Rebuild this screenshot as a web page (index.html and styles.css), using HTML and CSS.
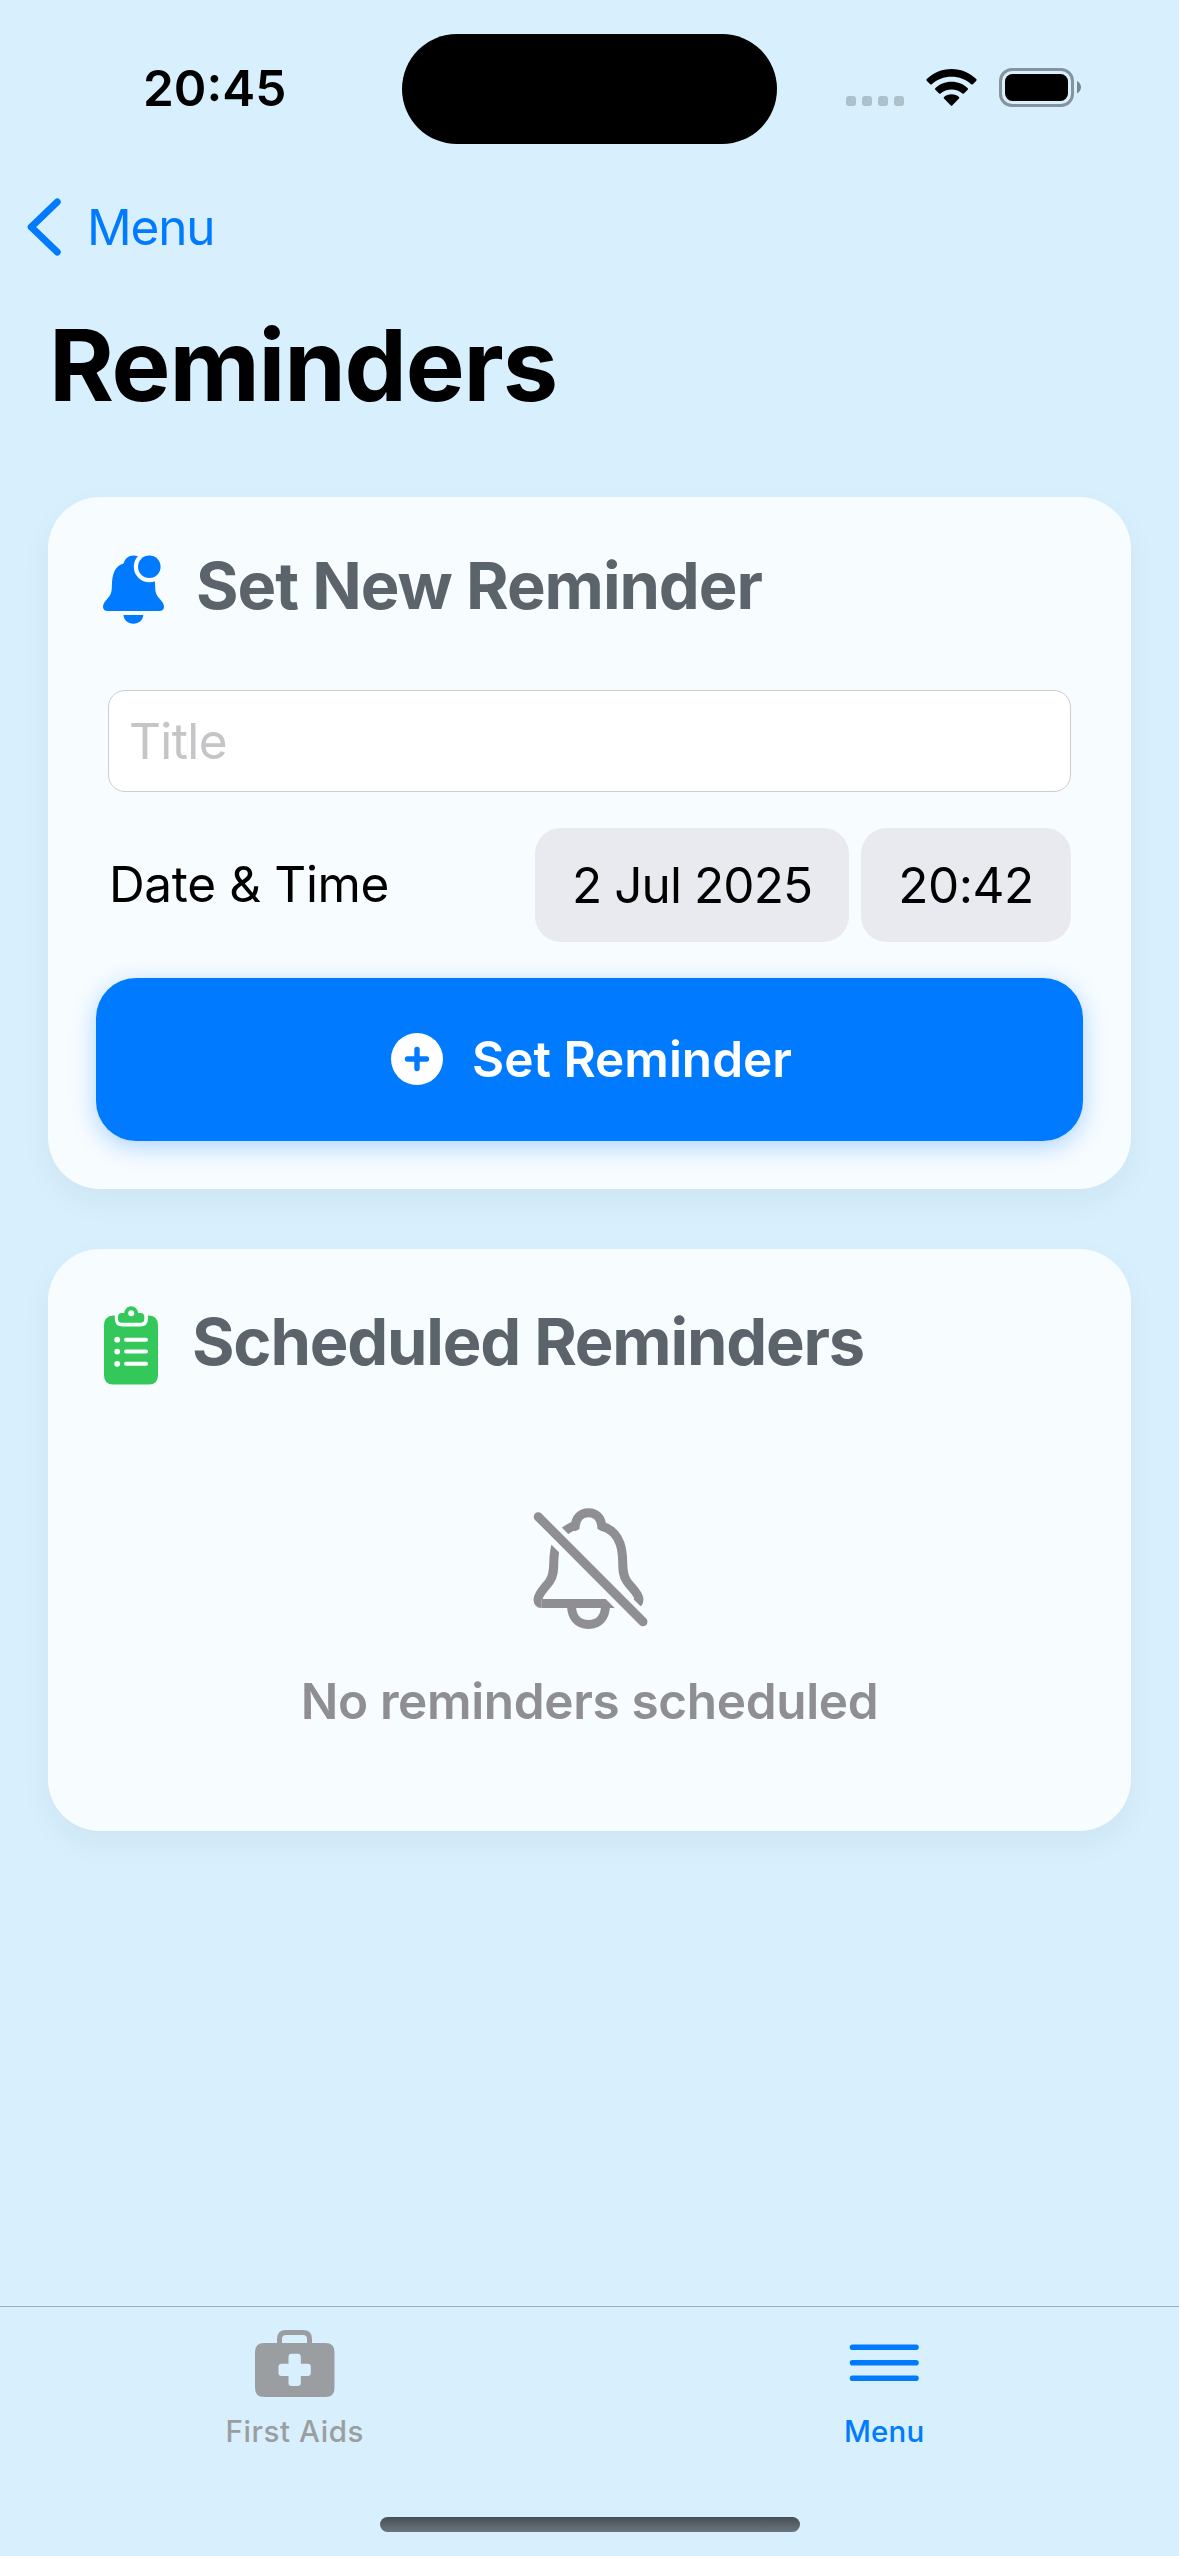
FILE: index.html
```html
<!DOCTYPE html>
<html lang="en">
<head>
<meta charset="utf-8">
<title>Reminders</title>
<link rel="stylesheet" href="styles.css">
</head>
<body>
<div class="screen">
  <header class="status-bar">
    <div class="status-time"><span class="clock">20:45</span></div>
    <div class="island"></div>
    <div class="status-icons">
      <svg class="signal" width="58" height="10" viewBox="0 0 58 10"><rect width="10" height="10" rx="3"/><rect x="16" width="10" height="10" rx="3"/><rect x="32" width="10" height="10" rx="3"/><rect x="48" width="10" height="10" rx="3"/></svg>
      <svg class="wifi" width="51" height="38" viewBox="0 0 51 38"><path d="M25.500 0C35.500 0 44 4 50.300 10.100Q51 11 50.300 11.700L46.800 15.200Q46 15.900 45.200 15.200C40 10.400 33 7.800 25.500 7.800S11 10.400 5.800 15.200Q5 15.900 4.200 15.200L.7 11.700Q0 11 .7 10.100C7 4 15.500 0 25.500 0Z"/><path d="M25.500 12.800C32 12.800 37.500 15.200 41.700 19.200Q42.400 20 41.700 20.700L37.900 24.400Q37.200 25 36.400 24.400C33.400 21.800 29.700 20.400 25.500 20.400S17.600 21.800 14.600 24.400Q13.800 25 13.100 24.400L9.300 20.700Q8.600 20 9.300 19.200C13.500 15.200 19 12.800 25.500 12.800Z"/><path d="M25.500 25.300C28.500 25.300 31 26.300 33 28.100Q33.700 28.900 33 29.600L26.200 36.600Q25.500 37.300 24.800 36.600L18 29.600Q17.300 28.900 18 28.100C20 26.300 22.500 25.300 25.500 25.300Z"/></svg>
      <svg class="battery" width="82" height="39" viewBox="0 0 82 39"><rect class="battery-shell" x="1.500" y="1.500" width="72" height="36" rx="11.500"/><rect x="6" y="6" width="63" height="27" rx="7.500"/><path class="battery-tip" d="M78 13Q82 15.500 82 19.300T78 25.600Z"/></svg>
    </div>
  </header>

  <nav class="nav-bar">
    <svg width="35" height="58" viewBox="0 0 35 58"><path d="M30.200 4L4.200 29L30.200 54" fill="none" stroke="currentColor" stroke-width="7" stroke-linecap="round" stroke-linejoin="round"/></svg>
    <span class="back-label">Menu</span>
  </nav>

  <h1 class="page-title"><span>Reminders</span></h1>

  <main class="cards">
    <section class="card">
      <div class="card-head">
        <svg class="bell-icon" width="62" height="70" viewBox="0 0 62 70"><defs><mask id="badge-gap"><rect width="62" height="70" fill="#fff"/><circle cx="46.300" cy="11.800" r="15.500"/></mask></defs><g fill="currentColor"><g mask="url(#badge-gap)"><path d="M5 56Q0 56 0 51.800C0 48.500 2.300 46 5 43C8 39.700 8.700 37 8.900 31C9 20 11.500 11 20.500 8.500C22 3.500 25.500 .5 30.500 .5S39 3.500 40.500 8.500C49.500 11 52 20 52.100 31C52.300 37 53 39.700 56 43C58.700 46 61 48.500 61 51.800Q61 56 56 56Z"/></g><path d="M20.500 60H40.300C40 65 36 68.700 30.400 68.700S20.800 65 20.500 60Z"/><circle cx="46.300" cy="11.800" r="11.300"/></g></svg>
        <h2 class="heading-new">Set New Reminder</h2>
      </div>
      <div class="title-field"><span>Title</span></div>
      <div class="date-row">
        <span class="date-label">Date &amp; Time</span>
        <span class="pill pill-date"><span>2 Jul 2025</span></span>
        <span class="pill pill-time"><span>20:42</span></span>
      </div>
      <div class="set-button">
        <svg width="52" height="52" viewBox="0 0 52 52"><circle cx="26" cy="26" r="26" fill="#fff"/><path d="M26 16.500V35.500M16.500 26H35.500" stroke="#007aff" stroke-width="5.400" stroke-linecap="round"/></svg>
        <span class="button-label">Set Reminder</span>
      </div>
    </section>

    <section class="card card-scheduled">
      <div class="card-head scheduled-head">
        <svg class="clipboard-icon" width="54" height="79" viewBox="0 0 54 79"><path fill="currentColor" d="M9.500 9.500H10.800V12.500Q10.800 20.500 18.500 20.500H36.300Q44 20.500 44 12.500V9.500H45Q54 10 54 19V69Q54 78.500 45 78.500H9Q0 78.500 0 69V19Q0 10 9.500 9.500Z"/><path fill="currentColor" fill-rule="evenodd" d="M20.200 7C20.700 3 23.500 .2 27.200 .2S33.700 3 34.200 7H36.500Q40.300 7 40.300 10.800V13Q40.300 16.800 36.500 16.800H17.800Q14 16.800 14 13V10.800Q14 7 17.800 7ZM27.200 4.200A3 3 0 1 0 27.200 10.200A3 3 0 1 0 27.200 4.200Z"/><g fill="#fff"><circle cx="13.200" cy="33.700" r="2.900"/><circle cx="13.200" cy="45.600" r="2.900"/><circle cx="13.200" cy="57.800" r="2.900"/><rect x="20" y="31.700" width="24" height="4" rx="2"/><rect x="20" y="43.600" width="24" height="4" rx="2"/><rect x="20" y="55.800" width="24" height="4" rx="2"/></g></svg>
        <h2 class="heading-scheduled">Scheduled Reminders</h2>
      </div>
      <div class="empty">
        <svg class="bell-slash" width="116" height="122" viewBox="0 0 116 122"><defs><mask id="slash-gap"><rect width="116" height="122" fill="#fff"/><path d="M-8 -3.500L124 128.500" stroke="#000" stroke-width="19.500"/></mask></defs><g fill="none" stroke="currentColor" stroke-width="9" stroke-linejoin="round"><g mask="url(#slash-gap)"><path stroke-linejoin="round" d="M8.500 95.500Q5 95.500 5 91.500C5.500 85 12 80 16.500 73.500C24 63 18 51 23.500 35.500C26.500 26 32 21 42 17.500"/><path d="M8.500 95.500H102.500Q106 95.500 106 91.500C105.500 85 98.500 80 94 73.500C86.500 63 92.500 51 87 35.500C83.500 26 78.500 21 69.500 18.500"/><path stroke-linejoin="miter" d="M40 19.500L42.200 18.200C43 9.500 48 4.800 55.500 4.800S68 9.500 68.800 18.200L71 19.500"/></g><path d="M38.500 97C38.500 109 45 116.500 55.500 116.500S72.500 109 72.500 97"/><path d="M5.200 8.700L110 113.800" stroke-linecap="round"/></g></svg>
        <p class="empty-text">No reminders scheduled</p>
      </div>
    </section>
  </main>

  <footer class="tab-bar">
    <div class="tabs">
      <div class="tab">
        <svg width="80" height="68" viewBox="0 0 80 68"><path fill="none" stroke="currentColor" stroke-width="5" d="M24.500 15V9Q24.500 2.500 31 2.500H48Q54.500 2.500 54.500 9V15"/><path fill="currentColor" fill-rule="evenodd" d="M9 13H70.500Q79.500 13 79.500 22V58Q79.500 67 70.500 67H9Q0 67 0 58V22Q0 13 9 13ZM36.500 23.800Q33.500 23.800 33.500 26.800V33.700H26.500Q23.500 33.700 23.500 36.700V43Q23.500 46 26.500 46H33.500V53Q33.500 56 36.500 56H42.800Q45.800 56 45.800 53V46H52.800Q55.800 46 55.800 43V36.700Q55.800 33.700 52.800 33.700H45.800V26.800Q45.800 23.800 42.800 23.800Z"/></svg>
        <span class="tab-label tab-first">First Aids</span>
      </div>
      <div class="tab tab-active">
        <svg width="70" height="68" viewBox="0 0 70 68"><path stroke="currentColor" stroke-width="5.600" stroke-linecap="round" d="M3.500 17.300H67M3.500 32.800H67M3.500 48.300H67"/></svg>
        <span class="tab-label tab-menu">Menu</span>
      </div>
    </div>
    <div class="home-indicator"></div>
  </footer>
</div>
</body>
</html>
```
FILE: styles.css
```css
* { box-sizing: border-box; }
body { margin: 0; background: #d8f0fe; font-family: Inter, "Liberation Sans", sans-serif; color: #000; }
svg { display: block; flex: none; }
h1, h2, p { margin: 0; }
span, h1, h2, p { white-space: nowrap; }

.screen { width: 1179px; height: 2556px; display: flex; flex-direction: column; overflow: hidden; }

.status-bar { height: 177px; display: grid; grid-template-columns: 402px 375px 402px; padding-top: 34px; }
.status-time { padding-left: 143px; font-size: 49.5px; font-weight: 600; line-height: 108px; }
.island { height: 110px; border-radius: 55px; background: #000; }
.status-icons { display: flex; align-items: flex-start; padding-top: 34px; padding-left: 69px; }
.signal { margin-top: 28px; fill: #adc1cd; }
.wifi { margin: 1px 22px 0; }
.battery-shell { fill: none; stroke: #84939c; stroke-width: 3; }
.battery-tip { fill: #788790; }

.nav-bar { height: 100px; display: flex; align-items: center; gap: 25px; padding-left: 27px; color: #007aff; font-size: 49.5px; letter-spacing: -1.2px; }

.page-title { margin: 38px 0 82px; padding-left: 49px; font-size: 99px; line-height: 100px; font-weight: 700; letter-spacing: -1.2px; }

.cards { display: flex; flex-direction: column; gap: 60px; padding: 0 48px; }
.card { height: 692px; padding: 48px; border-radius: 52px; background: #f7fcff; box-shadow: 0 12px 30px rgba(0, 0, 0, .05); }
.card-scheduled { height: 582px; }
.card-head { height: 81px; display: flex; align-items: center; padding-left: 7px; color: #5b646b; margin-bottom: 64px; }
.card-head h2 { font-size: 65px; line-height: 81px; font-weight: 700; letter-spacing: -1.05px; }
.card-head .heading-scheduled { letter-spacing: -1.2px; }
.bell-icon { color: #007aff; margin: 8px 31px 0 0; }
.clipboard-icon { color: #34c759; margin: 7px 34px 0 1px; }
.scheduled-head { height: 89px; margin-bottom: 122px; }

.title-field { height: 102px; margin: 0 12px 36px; padding-left: 20px; border: 1px solid #cccdcf; border-radius: 17px; background: #fff; color: #c5c5c7; font-size: 49.5px; line-height: 100px; letter-spacing: -.6px; }
.date-row { height: 114px; display: flex; margin: 0 12px 36px; font-size: 49.5px; line-height: 114px; }
.date-label { flex: 1; padding-left: 1px; line-height: 112px; letter-spacing: -.35px; }
.pill { display: flex; justify-content: center; width: 314px; border-radius: 26px; background: #e8eaef; letter-spacing: -.9px; }
.pill-time { width: 210px; margin-left: 12px; letter-spacing: -.5px; }
.set-button { height: 163px; display: flex; align-items: center; padding: 0 0 2px 295px; gap: 29px; border-radius: 40px; background: #007aff; color: #fff; font-size: 49.5px; font-weight: 600; box-shadow: 0 6px 24px rgba(0, 122, 255, .3); }

.empty { display: flex; flex-direction: column; align-items: center; color: #8e8e93; }
.bell-slash { margin-left: 3px; }
.empty-text { margin-top: 41px; font-size: 49.5px; line-height: 60px; font-weight: 600; letter-spacing: -.35px; }

.tab-bar { margin-top: auto; height: 250px; border-top: 1px solid #9cafba; }
.tabs { display: grid; grid-template-columns: 1fr 1fr; height: 210px; padding-top: 23px; }
.tab { display: flex; flex-direction: column; align-items: center; gap: 13px; color: #9b9ea0; }
.tab-active { color: #007aff; }
.tab-label { font-size: 29.5px; font-weight: 500; line-height: 40px; }
.tab-first { letter-spacing: .6px; }
.tab-menu { letter-spacing: .2px; }
.home-indicator { width: 420px; height: 15px; margin: 0 auto; border-radius: 8px; background: linear-gradient(#474f55, #69757c); }
```
